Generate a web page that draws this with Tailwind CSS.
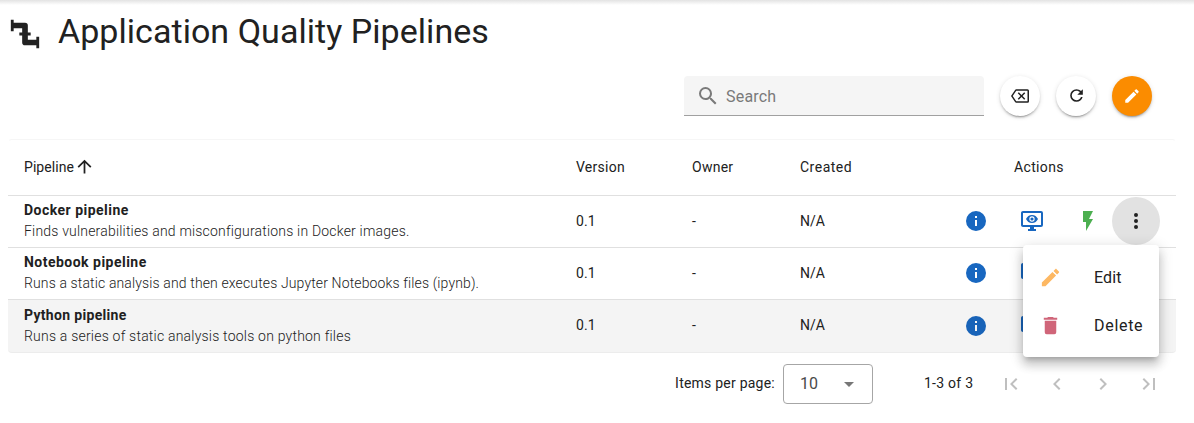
<!DOCTYPE html>
<html lang="en">
<head>
<meta charset="utf-8">
<title>Application Quality Pipelines</title>
<script src="https://cdn.jsdelivr.net/npm/@tailwindcss/browser@4"></script>
</head>
<body class="h-[423px] overflow-hidden bg-white font-[Roboto,sans-serif] text-sm text-[#212121]">
<svg class="hidden">
  <symbol id="pipe" viewBox="0 0 24 24"><path d="M22,14H20V16H14V13H16V11H14V6A2,2 0 0,0 12,4H4V2H2V10H4V8H10V11H8V13H10V18A2,2 0 0,0 12,20H20V22H22"/></symbol>
  <symbol id="pencil" viewBox="0 0 24 24"><path d="M20.71,7.04C21.1,6.65 21.1,6 20.71,5.63L18.37,3.29C18,2.9 17.35,2.9 16.96,3.29L15.12,5.12L18.87,8.87M3,17.25V21H6.75L17.81,9.93L14.06,6.18L3,17.25Z"/></symbol>
  <symbol id="info" viewBox="0 0 24 24"><path d="M13,9H11V7H13M13,17H11V11H13M12,2A10,10 0 0,0 2,12A10,10 0 0,0 12,22A10,10 0 0,0 22,12A10,10 0 0,0 12,2Z"/></symbol>
  <symbol id="monitor" viewBox="0 0 24 24"><path fill-rule="evenodd" d="M21,16V4H3V16H21M21,2A2,2 0 0,1 23,4V16A2,2 0 0,1 21,18H14V20H16V22H8V20H10V18H3C1.89,18 1,17.1 1,16V4C1,2.89 1.89,2 3,2H21M12,6C9.3,6 7,7.66 6,10C7,12.34 9.3,14 12,14C14.7,14 17,12.34 18,10C17,7.66 14.7,6 12,6M12,7.35A2.65,2.65 0 0,1 12,12.65A2.65,2.65 0 0,1 12,7.35M12,8.4A1.6,1.6 0 0,0 12,11.6A1.6,1.6 0 0,0 12,8.4Z"/></symbol>
  <symbol id="flash" viewBox="0 0 24 24"><path d="M7,2V13H10V22L17,10H13L17,2H7Z"/></symbol>
  <symbol id="dots" viewBox="0 0 24 24"><path d="M12,16A2,2 0 0,1 14,18A2,2 0 0,1 12,20A2,2 0 0,1 10,18A2,2 0 0,1 12,16M12,10A2,2 0 0,1 14,12A2,2 0 0,1 12,14A2,2 0 0,1 10,12A2,2 0 0,1 12,10M12,4A2,2 0 0,1 14,6A2,2 0 0,1 12,8A2,2 0 0,1 10,6A2,2 0 0,1 12,4Z"/></symbol>
</svg>

<div class="h-[5px] bg-linear-to-b from-[#e3e3e3] to-white"></div>

<header class="flex h-[59px] items-center px-2 pb-[2px]">
  <svg class="size-[34px] fill-current"><use href="#pipe"/></svg>
  <h1 class="-mt-[5px] ml-4 text-[34px] leading-10 tracking-[0.04px]">Application Quality Pipelines</h1>
</header>

<div class="mt-3 flex h-10 items-center justify-end gap-4 pr-[42px]">
  <div class="flex h-10 w-[300px] items-center rounded-t border-b border-[#a0a0a0] bg-[#f5f5f5] pl-3 text-[#7a7a7a]">
    <svg class="size-6 fill-current" viewBox="0 0 24 24"><path d="M9.5,3A6.5,6.5 0 0,1 16,9.5C16,11.11 15.41,12.59 14.44,13.73L14.71,14H15.5L20.5,19L19,20.5L14,15.5V14.71L13.73,14.44C12.59,15.41 11.11,16 9.5,16A6.5,6.5 0 0,1 3,9.5A6.5,6.5 0 0,1 9.5,3M9.5,5C7,5 5,7 5,9.5C5,12 7,14 9.5,14C12,14 14,12 14,9.5C14,7 12,5 9.5,5Z"/></svg>
    <span class="ml-1.5 pt-0.5 text-base tracking-[0.2px]">Search</span>
  </div>
  <button class="flex size-10 items-center justify-center rounded-full bg-white pb-px shadow-[0_3px_1px_-2px_rgba(0,0,0,.2),0_2px_2px_0_rgba(0,0,0,.14),0_1px_5px_0_rgba(0,0,0,.12)]">
    <svg class="size-[18px] fill-current" viewBox="0 0 24 24"><path d="M19,15.59L17.59,17L14,13.41L10.41,17L9,15.59L12.59,12L9,8.41L10.41,7L14,10.59L17.59,7L19,8.41L15.41,12L19,15.59M22,3A2,2 0 0,1 24,5V19A2,2 0 0,1 22,21H7C6.31,21 5.77,20.64 5.41,20.11L0,12L5.41,3.88C5.77,3.35 6.31,3 7,3H22M22,5H7L2.28,12L7,19H22V5Z"/></svg>
  </button>
  <button class="flex size-10 items-center justify-center rounded-full bg-white pb-px shadow-[0_3px_1px_-2px_rgba(0,0,0,.2),0_2px_2px_0_rgba(0,0,0,.14),0_1px_5px_0_rgba(0,0,0,.12)]">
    <svg class="size-[19px] fill-current" viewBox="0 0 24 24"><path d="M17.65,6.35C16.2,4.9 14.21,4 12,4A8,8 0 0,0 4,12A8,8 0 0,0 12,20C15.73,20 18.84,17.45 19.73,14H17.65C16.83,16.33 14.61,18 12,18A6,6 0 0,1 6,12A6,6 0 0,1 12,6C13.66,6 15.14,6.69 16.22,7.78L13,11H20V4L17.65,6.35Z"/></svg>
  </button>
  <button class="flex size-10 items-center justify-center rounded-full bg-[#fb8c00] pb-px text-white shadow-[0_3px_1px_-2px_rgba(0,0,0,.2),0_2px_2px_0_rgba(0,0,0,.14),0_1px_5px_0_rgba(0,0,0,.12)]">
    <svg class="size-[18px] fill-current"><use href="#pencil"/></svg>
  </button>
</div>

<main class="mt-[23px] ml-2 h-[277px] w-[1168px] rounded border border-transparent border-t-[#f6f6f6] tracking-[0.12px]">
  <div class="-mx-px grid h-14 grid-cols-[552px_116px_108px_214px_178px] items-center border-b border-[#e0e0e0] pb-[2px]">
    <div class="flex items-center pl-4 tracking-[0.05px]">Pipeline<svg class="size-[21px] fill-current" viewBox="0 0 24 24"><path d="M13,20H11V8L5.5,13.5L4.08,12.08L12,4.16L19.92,12.08L18.5,13.5L13,8V20Z"/></svg></div>
    <div class="pl-4 tracking-[0.25px]">Version</div><div class="pl-4 tracking-[0.25px]">Owner</div><div class="pl-4 tracking-[0.5px]">Created</div><div class="pl-4 tracking-[0.35px]">Actions</div>
  </div>

  <div class="-mx-px grid h-[52px] grid-cols-[552px_116px_108px_152px_56px_56px_56px_48px] items-center border-b border-[#e0e0e0] pb-[2px]">
    <div class="pl-4"><div class="leading-[21px] font-bold tracking-[0.48px]">Docker pipeline</div><div class="leading-[21px] font-light tracking-[0.19px]">Finds vulnerabilities and misconfigurations in Docker images.</div></div>
    <div class="pl-4">0.1</div><div class="pl-4">-</div><div class="pl-4 tracking-normal">N/A</div>
    <svg class="ml-7 size-6 fill-[#1867c0]"><use href="#info"/></svg>
    <svg class="ml-7 size-6 fill-[#1867c0]"><use href="#monitor"/></svg>
    <svg class="ml-7 size-6 fill-[#4caf50]"><use href="#flash"/></svg>
    <button class="ml-2 flex size-12 items-center justify-center rounded-full bg-[#e2e2e2]"><svg class="size-6 fill-current"><use href="#dots"/></svg></button>
  </div>

  <div class="-mx-px grid h-[52px] grid-cols-[552px_116px_108px_152px_56px_56px_56px_48px] items-center border-b border-[#e0e0e0] pb-[2px]">
    <div class="pl-4"><div class="leading-[21px] font-bold tracking-[0.48px]">Notebook pipeline</div><div class="leading-[21px] font-light tracking-[0.13px]">Runs a static analysis and then executes Jupyter Notebooks files (ipynb).</div></div>
    <div class="pl-4">0.1</div><div class="pl-4">-</div><div class="pl-4 tracking-normal">N/A</div>
    <svg class="ml-7 size-6 fill-[#1867c0]"><use href="#info"/></svg>
    <svg class="ml-7 size-6 fill-[#1867c0]"><use href="#monitor"/></svg>
  </div>

  <div class="-mx-px grid h-[53px] grid-cols-[552px_116px_108px_152px_56px_56px_56px_48px] items-center rounded-b border-b border-[#ececec] bg-[#f4f4f4]">
    <div class="pl-4"><div class="leading-[21px] font-bold tracking-[0.32px]">Python pipeline</div><div class="leading-[21px] font-light tracking-[0.21px]">Runs a series of static analysis tools on python files</div></div>
    <div class="pb-0.5 pl-4">0.1</div><div class="pb-0.5 pl-4">-</div><div class="pb-0.5 pl-4 tracking-normal">N/A</div>
    <svg class="ml-7 size-6 fill-[#1863b8]"><use href="#info"/></svg>
    <svg class="ml-7 size-6 fill-[#1863b8]"><use href="#monitor"/></svg>
  </div>

  <footer class="flex h-[62px] items-center justify-end pr-[14px]">
    <span class="pb-0.5 tracking-[0.23px]">Items per page:</span>
    <div class="ml-2 flex h-10 w-[90px] items-center justify-between rounded border border-[#a6a6a6] pr-[11px] pl-4 text-base text-[#4a4a4a]">
      <span>10</span>
      <svg class="size-6 fill-[#777]" viewBox="0 0 24 24"><path d="M7,10L12,15L17,10H7Z"/></svg>
    </div>
    <span class="ml-[51px] w-[49px] pb-0.5 tracking-[0.25px] whitespace-nowrap">1-3 of 3</span>
    <div class="ml-[26px] flex gap-[22px] text-[#bfbfbf]">
      <svg class="size-6 fill-current" viewBox="0 0 24 24"><path d="M18.41,16.59L13.82,12L18.41,7.41L17,6L11,12L17,18L18.41,16.59M6,6H8V18H6V6Z"/></svg>
      <svg class="size-6 fill-current" viewBox="0 0 24 24"><path d="M15.41,16.58L10.83,12L15.41,7.41L14,6L8,12L14,18L15.41,16.58Z"/></svg>
      <svg class="size-6 fill-current" viewBox="0 0 24 24"><path d="M8.59,16.58L13.17,12L8.59,7.41L10,6L16,12L10,18L8.59,16.58Z"/></svg>
      <svg class="size-6 fill-current" viewBox="0 0 24 24"><path d="M5.59,7.41L10.18,12L5.59,16.59L7,18L13,12L7,6L5.59,7.41M16,6H18V18H16V6Z"/></svg>
    </div>
  </footer>
</main>

<div class="absolute top-[245px] left-[1023px] h-28 w-[136px] rounded bg-white py-2 text-base shadow-[0_5px_5px_-3px_rgba(0,0,0,.2),0_8px_10px_1px_rgba(0,0,0,.14),0_3px_14px_2px_rgba(0,0,0,.12)]">
  <div class="flex h-12 items-center pl-4"><svg class="size-[23px] fill-[#fdb863]"><use href="#pencil"/></svg><span class="ml-8 pt-0.5 tracking-[0.15px]">Edit</span></div>
  <div class="flex h-12 items-center pl-4"><svg class="size-[23px] fill-[#d06579]" viewBox="0 0 24 24"><path d="M19,4H15.5L14.5,3H9.5L8.5,4H5V6H19M6,19A2,2 0 0,0 8,21H16A2,2 0 0,0 18,19V7H6V19Z"/></svg><span class="ml-8 pt-0.5 tracking-[0.7px]">Delete</span></div>
</div>
</body>
</html>
